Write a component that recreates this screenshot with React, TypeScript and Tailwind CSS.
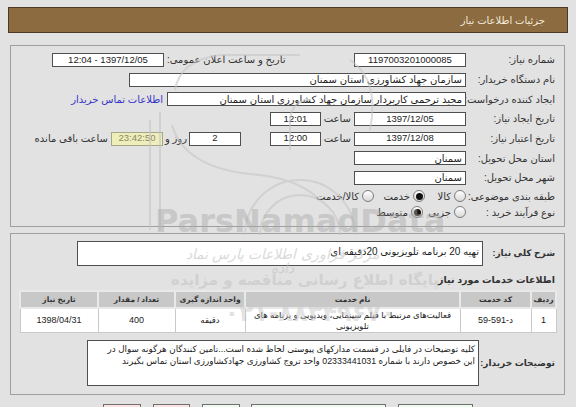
import React from "react";

type BoxProps = {
    w: string;
    h?: string;
    align?: "center" | "start";
    className?: string;
    children?: React.ReactNode;
};

const Box: React.FC<BoxProps> = ({ w, h = "h-[14px]", align = "center", className = "", children }) => (
    <div
        className={`${w} ${h} shrink-0 bg-white border border-[#4f4f4f] flex items-center whitespace-nowrap overflow-hidden text-[9.5px] text-[#222] ${
            align === "center" ? "justify-center" : "justify-start pr-[3px]"
        } ${className}`}
    >
        {children}
    </div>
);

const Radio: React.FC<{ checked?: boolean }> = ({ checked }) => (
    <span className="w-[12px] h-[12px] shrink-0 rounded-full border border-[#7b7b7b] bg-linear-to-b from-white to-[#d9d9d9] flex items-center justify-center">
        {checked && <span className="w-[7px] h-[7px] rounded-full bg-[#111]" />}
    </span>
);

const Label: React.FC<{ children: React.ReactNode }> = ({ children }) => (
    <div className="w-[85px] ml-[4px] shrink-0 whitespace-nowrap text-[10px] text-[#333]">{children}</div>
);

const Row: React.FC<{ className?: string; children: React.ReactNode }> = ({ className = "h-[19.7px]", children }) => (
    <div className={`flex items-center ${className}`}>{children}</div>
);

const Watermark = () => (
    <div className="absolute inset-0 pointer-events-none select-none">
        <svg className="absolute left-0 top-0" width="576" height="407">
            <g fill="none" stroke="#c6c6c6" strokeWidth="2" opacity="0.6">
                <path d="M150 120 L150 230" />
                <path d="M160 112 L160 230" />
                <path d="M175 90 Q180 60 220 55 L300 55" />
                <path d="M172 125 Q185 170 260 175 Q300 180 320 200" />
                <path d="M245 235 A55 55 0 0 1 355 235" />
                <path d="M260 235 A40 40 0 0 1 340 235" />
                <path d="M290 150 L290 120 Q292 100 310 100" />
                <path d="M350 60 Q380 80 370 130" />
            </g>
        </svg>
        <div className="absolute left-[155px] top-[205px] font-['DejaVu_Sans',sans-serif] font-bold text-[32px] leading-none text-[#a9a9a9] opacity-45">
            ParsNamadData
        </div>
        <div
            dir="rtl"
            className="absolute left-[175px] top-[247px] w-[215px] text-center italic text-[14px] leading-none text-[#c2c2c2] opacity-60 font-['DejaVu_Serif',serif]"
        >
            مرکز فراوری اطلاعات پارس نماد داده
        </div>
        <div
            dir="rtl"
            className="absolute left-[165px] top-[273px] w-[280px] text-center font-bold text-[15px] leading-none text-[#c2c2c2] opacity-55 font-['DejaVu_Sans',sans-serif]"
        >
            پایگاه اطلاع رسانی مناقصه و مزایده
        </div>
        <div
            dir="rtl"
            className="absolute left-[195px] top-[301px] w-[230px] text-center font-bold text-[24px] leading-none text-[#c8c8c8] opacity-50 font-['DejaVu_Sans',sans-serif]"
        >
            ۰۲۱-۸۸۳۴۹۶۷۰
        </div>
    </div>
);

const App: React.FC = () => {
    return (
        <div
            dir="rtl"
            className="relative w-[576px] h-[407px] overflow-hidden bg-[#e2e2e2] pt-[7px] font-['Liberation_Sans','DejaVu_Sans',sans-serif] text-[#222]"
        >
            {/* header */}
            <div className="mx-[8px] h-[26px] bg-[#8b6b3f] border border-[#4b3b24] flex items-center pr-[22px] text-[10px] text-[#f4ecdd]">
                جزئیات اطلاعات نیاز
            </div>

            {/* main info */}
            <div className="mt-[12px] mr-[11px] ml-[10px] border border-[#9f9f9f] pt-[4px] pb-[6px] pr-[9px]">
                <Row>
                    <Label>شماره نیاز:</Label>
                    <Box w="w-[112px]">1197003201000085</Box>
                    <div className="mr-auto ml-[41px] flex items-center">
                        <span className="ml-[3px] text-[10px] text-[#333] whitespace-nowrap">تاریخ و ساعت اعلان عمومی:</span>
                        <Box w="w-[112px]">1397/12/05 - 12:04</Box>
                    </div>
                </Row>
                <Row>
                    <Label>نام دستگاه خریدار:</Label>
                    <Box w="w-[337px]" align="start" className="text-[10px]!">سازمان جهاد کشاورزی استان سمنان</Box>
                </Row>
                <Row>
                    <Label>ایجاد کننده درخواست:</Label>
                    <Box w="w-[299px]" align="start" className="text-[10px]!">مجید ترحمی کاربردار سازمان جهاد کشاورزی استان سمنان</Box>
                    <span className="mr-[4px] text-[10px] text-[#3535c8] whitespace-nowrap">اطلاعات تماس خریدار</span>
                </Row>
                <Row>
                    <Label>تاریخ ایجاد نیاز:</Label>
                    <Box w="w-[112px]">1397/12/05</Box>
                    <span className="w-[33px] pr-[3px] shrink-0 text-[10px] text-[#333]">ساعت</span>
                    <Box w="w-[51px]">12:01</Box>
                </Row>
                <Row>
                    <Label>تاریخ اعتبار نیاز:</Label>
                    <Box w="w-[112px]">1397/12/08</Box>
                    <span className="w-[33px] pr-[3px] shrink-0 text-[10px] text-[#333]">ساعت</span>
                    <Box w="w-[51px]">12:00</Box>
                    <Box w="w-[52px]" className="mr-[29px]">2</Box>
                    <span className="w-[26px] pr-[2px] shrink-0 text-[10px] text-[#333] whitespace-nowrap">روز و</span>
                    <Box w="w-[52px]" className="bg-[#eeeebb]! border-[#a5a58a]! text-[#8a8a6a]!">23:42:50</Box>
                    <span className="mr-[3px] text-[10px] text-[#333] whitespace-nowrap">ساعت باقی مانده</span>
                </Row>
                <Row>
                    <Label>استان محل تحویل:</Label>
                    <Box w="w-[112px]" align="start" className="text-[10px]!">سمنان</Box>
                </Row>
                <Row>
                    <Label>شهر محل تحویل:</Label>
                    <Box w="w-[112px]" align="start" className="text-[10px]!">سمنان</Box>
                </Row>
                <Row className="h-[17px]">
                    <Label>طبقه بندی موضوعی:</Label>
                    <div className="flex items-center text-[10px] text-[#333]">
                        <Radio />
                        <span className="w-[29px] pr-[3px] shrink-0 whitespace-nowrap">کالا</span>
                        <Radio checked />
                        <span className="w-[39px] pr-[3px] shrink-0 whitespace-nowrap">خدمت</span>
                        <Radio />
                        <span className="pr-[3px] whitespace-nowrap">کالا/خدمت</span>
                    </div>
                </Row>
                <Row className="h-[15px]">
                    <Label>نوع فرآیند خرید :</Label>
                    <div className="flex items-center text-[10px] text-[#333]">
                        <Radio />
                        <span className="w-[31px] pr-[3px] shrink-0 whitespace-nowrap">جزیی</span>
                        <Radio checked />
                        <span className="pr-[3px] whitespace-nowrap">متوسط</span>
                    </div>
                </Row>
            </div>

            {/* need details */}
            <div className="mt-[6px] mr-[11px] ml-[10px] border border-[#9f9f9f] pt-[7px] pb-[8px] pr-[9px]">
                <div className="flex items-center">
                    <div className="w-[72px] shrink-0 whitespace-nowrap font-bold text-[9px] text-[#333]">شرح کلی نیاز:</div>
                    <div className="w-[406px] h-[25px] bg-white border border-[#4f4f4f] pr-[3px] pt-[2px] text-[10px] text-[#222] whitespace-nowrap">
                        تهیه 20 برنامه تلویزیونی 20دقیقه ای
                    </div>
                </div>

                <div className="mt-[7px] h-[14px] flex items-center font-bold text-[9.5px] text-[#333]">
                    اطلاعات خدمات مورد نیاز
                </div>

                <table className="mt-[3px] mr-[-2px] w-[536px] table-fixed border-collapse text-[9px] text-[#222]">
                    <colgroup>
                        <col className="w-[25px]" />
                        <col className="w-[71px]" />
                        <col className="w-[215px]" />
                        <col className="w-[70px]" />
                        <col className="w-[77px]" />
                        <col className="w-[78px]" />
                    </colgroup>
                    <thead>
                        <tr className="h-[17px] bg-[#c8c8c8] text-[#333] text-[7.5px] whitespace-nowrap">
                            <th className="border-2 border-[#e9e9e9] font-bold">ردیف</th>
                            <th className="border-2 border-[#e9e9e9] font-bold">کد خدمت</th>
                            <th className="border-2 border-[#e9e9e9] font-bold">نام خدمت</th>
                            <th className="border-2 border-[#e9e9e9] font-bold">واحد اندازه گیری</th>
                            <th className="border-2 border-[#e9e9e9] font-bold">تعداد / مقدار</th>
                            <th className="border-2 border-[#e9e9e9] font-bold">تاریخ نیاز</th>
                        </tr>
                    </thead>
                    <tbody>
                        <tr className="h-[25px] bg-white text-center">
                            <td className="border border-[#c9c9c9]">1</td>
                            <td className="border border-[#c9c9c9]">د-591-59</td>
                            <td className="border border-[#c9c9c9] leading-[11px] text-[8.5px] px-[8px]">
                                فعالیت‌های مرتبط با فیلم سینمایی، ویدیویی و برنامه های تلویزیونی
                            </td>
                            <td className="border border-[#c9c9c9] text-[8.5px]">دقیقه</td>
                            <td className="border border-[#c9c9c9]">400</td>
                            <td className="border border-[#c9c9c9]">1398/04/31</td>
                        </tr>
                    </tbody>
                </table>

                <div className="mt-[7px] flex items-center">
                    <div className="w-[76px] shrink-0 whitespace-nowrap font-bold text-[9px] text-[#333]">توضیحات خریدار:</div>
                    <div className="w-[392px] h-[46px] bg-white border border-[#4f4f4f] pr-[3px] pt-[2px] text-[8.8px] leading-[12px] text-[#222] whitespace-nowrap overflow-hidden">
                        کلیه توضیحات در فایلی در قسمت مدارکهای پیوستی لحاظ شده است...تامین کنندگان هرگونه سوال در
                        <br />
                        این خصوص دارند با شماره 02333441031 واحد تروج کشاورزی جهادکشاورزی استان تماس بگیرند
                    </div>
                </div>
            </div>

            {/* buttons */}
            <div dir="ltr" className="mt-[9px] flex">
                <div className="ml-[103px] w-[38px] h-[22px] bg-[#fde2e2] border border-[#6f6f6f]" />
                <div className="ml-[12px] w-[37px] h-[22px] bg-[#fde2e2] border border-[#6f6f6f]" />
                <div className="ml-[12px] w-[38px] h-[22px] bg-[#ecfbec] border border-[#6f6f6f]" />
                <div className="ml-[11px] w-[135px] h-[22px] bg-[#ecfbec] border border-[#6f6f6f]" />
                <div className="ml-[12px] w-[75px] h-[22px] bg-[#ecfbec] border border-[#6f6f6f]" />
            </div>

            <Watermark />
        </div>
    );
};

export default App;
